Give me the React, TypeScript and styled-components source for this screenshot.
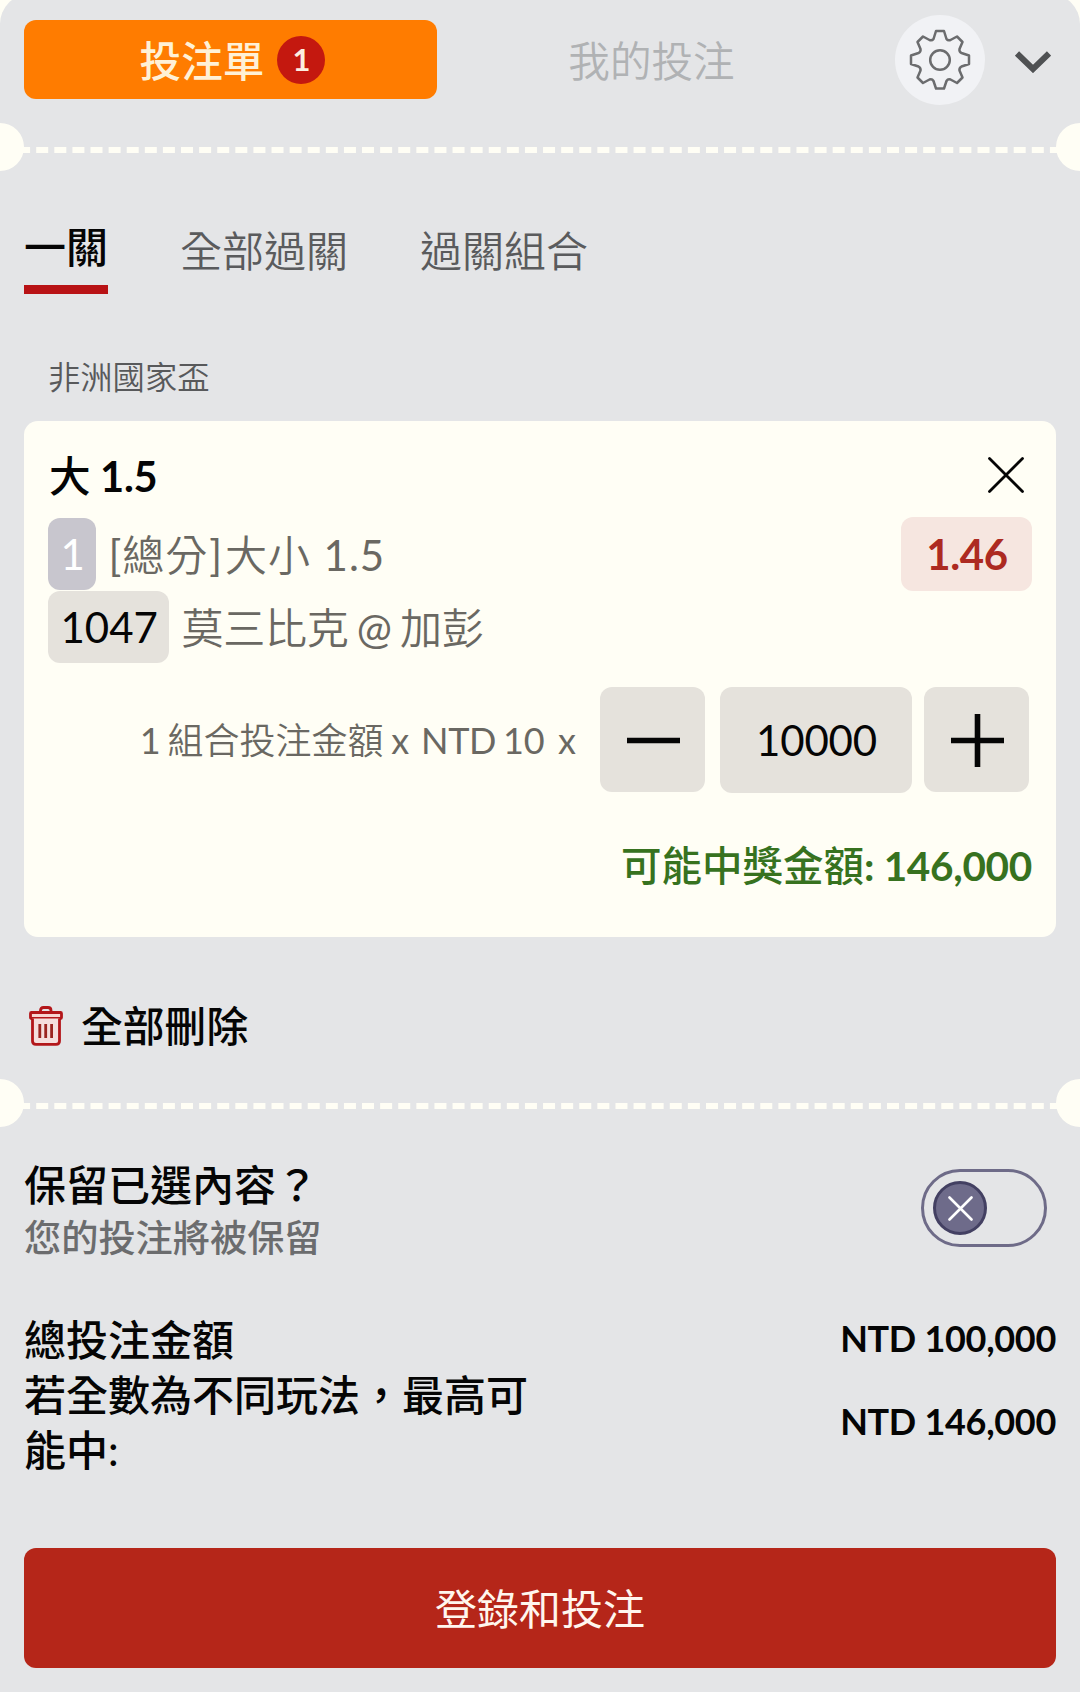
import React, { useState } from "react";
import styled, { createGlobalStyle } from "styled-components";

const GlobalStyle = createGlobalStyle`
  *, *::before, *::after { box-sizing: border-box; }
  body {
    margin: 0;
    background: #fffef5;
    font-family: Lato, "Noto Sans CJK TC", sans-serif;
    -webkit-font-smoothing: antialiased;
  }
  button {
    font: inherit;
    color: inherit;
    border: 0;
    padding: 0;
    margin: 0;
    background: none;
    cursor: pointer;
  }
`;

const Screen = styled.div`
  width: 1080px;
  height: 1692px;
  overflow: hidden;
`;

const Slip = styled.main`
  display: flex;
  flex-direction: column;
  height: 1698px;
  margin-top: -6px;
  padding-top: 6px;
  border-radius: 30px 30px 0 0;
  background: #e4e5e7;
  overflow: hidden;
  color: #050505;
  font-size: 42px;
  line-height: 54px;
`;

const Header = styled.header`
  display: flex;
  align-items: center;
  height: 123px;
  padding: 0 24px 3px;
`;

const SlipTab = styled.button<{ $active?: boolean }>`
  display: flex;
  align-items: center;
  justify-content: center;
  gap: 13px;
  width: 413px;
  height: 79px;
  margin-bottom: 1px;
  border-radius: 12px;
  padding: 2px 0 0 ${(p) => (p.$active ? "4px" : "16px")};
  font-size: 41.6px;
  font-weight: ${(p) => (p.$active ? 500 : 350)};
  color: ${(p) => (p.$active ? "#fff1d6" : "#b0b2b4")};
  background: ${(p) => (p.$active ? "#ff7c00" : "transparent")};
`;

const Count = styled.span`
  width: 48px;
  height: 48px;
  margin-top: -1px;
  border-radius: 50%;
  background: #c4180f;
  color: #fdeee0;
  font-size: 31px;
  font-weight: 700;
  line-height: 47px;
  text-align: center;
`;

const GearButton = styled.button`
  display: grid;
  place-items: center;
  width: 90px;
  height: 90px;
  margin-left: 45px;
  border-radius: 50%;
  background: #f1f2f5;
`;

const CollapseButton = styled.button`
  display: grid;
  place-items: center;
  margin: 4px 0 0 30px;
`;

const Perforation = styled.div`
  position: relative;
  flex: none;
  height: 48px;
  padding-top: 24px;

  &::before,
  &::after {
    content: "";
    position: absolute;
    top: 0;
    width: 48px;
    height: 48px;
    border-radius: 50%;
    background: #fffef5;
  }
  &::before { left: -24px; }
  &::after { right: -24px; }
`;

const Dashes = styled.div`
  border-top: 6px dashed #fffef5;
`;

const ModeTabs = styled.nav`
  display: flex;
  gap: 72px;
  height: 123px;
  padding: 0 24px;
  margin-top: 49px;
`;

const ModeTab = styled.button<{ $active?: boolean }>`
  height: 74px;
  line-height: 54px;
  padding: ${(p) => (p.$active ? "0 0 11px" : "4px 0 16px")};
  font-weight: ${(p) => (p.$active ? 500 : 350)};
  color: ${(p) => (p.$active ? "#050505" : "#5a5b5d")};
  border-bottom: ${(p) => (p.$active ? "9px solid #b81215" : "0")};
`;

const League = styled.h2`
  margin: 0;
  height: 78px;
  padding: 14px 48px 0;
  font-size: 32.3px;
  line-height: 40px;
  font-weight: 350;
  color: #58595b;
`;

const Card = styled.section`
  height: 516px;
  margin: 0 24px;
  padding: 28px 24px 0;
  border-radius: 14px;
  background: #fffef5;
`;

const CardHead = styled.div`
  display: flex;
  justify-content: space-between;
  align-items: center;
  height: 54px;
  padding: 0 8px 0 1px;
`;

const Pick = styled.h3`
  margin: 0;
  font-size: 41.6px;
  font-weight: 500;
  word-spacing: -1px;
`;

const Strong = styled.span`
  font-weight: 700;
  letter-spacing: -0.3px;
`;

const CloseButton = styled.button`
  display: grid;
  margin-bottom: 2px;
`;

const Selection = styled.div`
  display: flex;
  justify-content: space-between;
  margin-top: 14px;
`;

const Lines = styled.div`
  display: grid;
  gap: 1px;
  padding-top: 1px;
`;

const Line = styled.div`
  display: flex;
  align-items: center;
  gap: 12px;
  height: 72px;
  color: #6a6862;
  font-weight: 350;
  white-space: pre;
`;

const LineText = styled.span<{ $spaced?: boolean }>`
  padding-top: 2px;
  letter-spacing: ${(p) => (p.$spaced ? "1px" : "-0.2px")};
  word-spacing: ${(p) => (p.$spaced ? "0" : "-3px")};
`;

const Latin = styled.span`
  font-weight: 400;
`;

const ClosingBracket = styled(Latin)`
  margin: 0 2px 0 1px;
`;

const Chip = styled.span<{ $tone: "lilac" | "sand" }>`
  height: 72px;
  padding: 0 11.5px 0 12.5px;
  border-radius: 12px;
  line-height: 73px;
  font-weight: 400;
  color: ${(p) => (p.$tone === "lilac" ? "#ffffff" : "#050505")};
  background: ${(p) => (p.$tone === "lilac" ? "#c8c6ce" : "#e5e2dc")};
`;

const Odds = styled.span`
  width: 131px;
  height: 74px;
  border-radius: 12px;
  padding-left: 1px;
  background: #f6e6e0;
  color: #ad2a21;
  font-weight: 700;
  letter-spacing: -0.4px;
  line-height: 75px;
  text-align: center;
`;

const StakeRow = styled.div`
  display: flex;
  align-items: flex-start;
  justify-content: flex-end;
  height: 106px;
  margin-top: 24px;
  padding-right: 3px;
`;

const StakeLabel = styled.span`
  margin-right: 24px;
  font-size: 36px;
  line-height: 107px;
  font-weight: 350;
  color: #6a6862;
  white-space: pre;
`;

const Combos = styled(Latin)`
  margin-right: -3px;
`;

const Times = styled(Latin)`
  margin: 0 2px 0 -2px;
`;

const UnitPrice = styled(Latin)`
  margin-right: 4px;
  letter-spacing: -0.3px;
  word-spacing: -2px;
`;

const StepButton = styled.button`
  display: grid;
  flex: none;
  place-items: center;
  width: 105px;
  height: 105px;
  padding: 1px 0 0 1px;
  border-radius: 12px;
  background: #e5e2dc;
`;

const Amount = styled.output`
  flex: none;
  width: 192px;
  height: 106px;
  margin: 0 12px 0 15px;
  border-radius: 12px;
  padding-left: 1px;
  background: #e5e2dc;
  letter-spacing: -0.2px;
  line-height: 107px;
  text-align: center;
`;

const Payout = styled.p`
  margin: 46px 0 0;
  font-size: 40.5px;
  font-weight: 500;
  color: #37721f;
  text-align: right;
`;

const ClearAll = styled.button`
  display: flex;
  align-items: center;
  gap: 18px;
  height: 54px;
  margin: 62px 29px 26px;
  font-size: 41.8px;
  font-weight: 500;
`;

const KeepRow = styled.div`
  display: flex;
  justify-content: space-between;
  align-items: flex-start;
  height: 166px;
  margin-top: 31px;
  padding: 0 33px 0 24px;
`;

const KeepTitle = styled.div`
  font-weight: 500;
`;

const KeepNote = styled.div`
  padding-top: 2px;
  font-size: 37.2px;
  line-height: 48px;
  font-weight: 500;
  color: #6b6c6e;
`;

const Toggle = styled.button`
  display: flex;
  align-items: center;
  width: 126px;
  height: 78px;
  margin-top: 11px;
  padding-left: 9px;
  border: 3px solid #6e6b88;
  border-radius: 39px;
`;

const Knob = styled.span`
  display: grid;
  place-items: center;
  width: 54px;
  height: 54px;
  border: 3px solid #434062;
  border-radius: 50%;
  background: #6e6b8a;
`;

const Totals = styled.dl`
  display: grid;
  grid-template-columns: 510px 1fr;
  align-items: center;
  margin: -11px 24px 0;
  line-height: 55px;
`;

const TotalLabel = styled.dt`
  font-weight: 500;
`;

const TotalValue = styled.dd`
  margin: 0;
  padding-bottom: 5px;
  font-size: 36px;
  line-height: 50px;
  font-weight: 700;
  letter-spacing: -0.3px;
  text-align: right;
`;

const Submit = styled.button`
  flex: none;
  height: 120px;
  margin: 70px 24px 0;
  padding-top: 1px;
  border-radius: 12px;
  background: #b52619;
  color: #fff6ee;
  font-weight: 400;
`;

function GearIcon() {
  return (
    <svg width="62" height="62" viewBox="-31 -31 62 62" fill="none" stroke="#6b6c6e" strokeWidth="2.5" strokeLinejoin="round">
      <circle r="9.8" />
      <path d="M-4 -29H4L6.5 -21Q8 -19 10.5 -20L17 -23.5L22.5 -18L19.5 -11Q19 -8 21.5 -7L29 -4.5V4L21.5 6.5Q19 8 19.5 10.5L22.5 17.5L17 23L10.5 19.5Q8 18.5 6.5 21L4 28.5H-4L-6.5 21Q-8 18.5 -10.5 19.5L-17 23L-22.5 17.5L-19.5 10.5Q-19 8 -21.5 6.5L-29 4V-4.5L-21.5 -7Q-19 -8 -19.5 -11L-22.5 -18L-17 -23.5L-10.5 -20Q-8 -19 -6.5 -21Z" />
    </svg>
  );
}

function ChevronIcon() {
  return (
    <svg width="36" height="22" viewBox="0 0 36 22" fill="none" stroke="#4f5153" strokeWidth="6">
      <path d="M2 2.5L18 18L34 2.5" />
    </svg>
  );
}

function CrossIcon({ size, color, weight }: { size: number; color: string; weight: number }) {
  const end = size - 1.5;
  return (
    <svg width={size} height={size} fill="none" stroke={color} strokeWidth={weight} strokeLinecap="round">
      <path d={`M1.5 1.5L${end} ${end}M${end} 1.5L1.5 ${end}`} />
    </svg>
  );
}

function StepIcon({ plus }: { plus?: boolean }) {
  return (
    <svg width="53" height="53" viewBox="0 0 53 53" fill="none" stroke="#050505" strokeWidth="5.6">
      <path d={plus ? "M0 26.5H53M26.5 0V53" : "M0 26.5H53"} />
    </svg>
  );
}

function TrashIcon() {
  return (
    <svg width="34" height="40" viewBox="0 0 34 40" fill="none" stroke="#b3161a" strokeWidth="2.8" strokeLinejoin="round">
      <path d="M11.5 6.5V4.5Q11.5 1.5 14.5 1.5H19Q22 1.5 22 4.5V6.5" />
      <rect x="1.5" y="6.5" width="31" height="6" rx="1" fill="#f7d5d2" />
      <path d="M3.5 12.5V35Q3.5 38.3 7 38.3H27Q30.5 38.3 30.5 35V12.5" fill="#f5dedd" />
      <path d="M10.8 18V32M16.7 18V32M22.6 18V32" stroke="#9b2420" />
    </svg>
  );
}

export default function App() {
  const [units, setUnits] = useState(10000);
  const stake = units * 10;
  const win = Math.round(stake * 1.46);

  return (
    <Screen>
      <GlobalStyle />
      <Slip>
        <Header>
          <SlipTab $active>
            <span>投注單</span>
            <Count>1</Count>
          </SlipTab>
          <SlipTab>我的投注</SlipTab>
          <GearButton aria-label="設定">
            <GearIcon />
          </GearButton>
          <CollapseButton aria-label="收合">
            <ChevronIcon />
          </CollapseButton>
        </Header>

        <Perforation>
          <Dashes />
        </Perforation>

        <ModeTabs>
          <ModeTab $active>一關</ModeTab>
          <ModeTab>全部過關</ModeTab>
          <ModeTab>過關組合</ModeTab>
        </ModeTabs>

        <League>非洲國家盃</League>
        <Card>
          <CardHead>
            <Pick>大 <Strong>1.5</Strong></Pick>
            <CloseButton aria-label="移除">
              <CrossIcon size={36} color="#050505" weight={2.8} />
            </CloseButton>
          </CardHead>
          <Selection>
            <Lines>
              <Line>
                <Chip $tone="lilac">1</Chip>
                <LineText $spaced>
                  <Latin>[</Latin>總分<ClosingBracket>]</ClosingBracket>大小 <Latin>1.5</Latin>
                </LineText>
              </Line>
              <Line>
                <Chip $tone="sand">1047</Chip>
                <LineText>莫三比克 <Latin>@</Latin> 加彭</LineText>
              </Line>
            </Lines>
            <Odds>1.46</Odds>
          </Selection>
          <StakeRow>
            <StakeLabel>
              <Combos>1</Combos> 組合投注金額 <Times>x</Times> <UnitPrice>NTD 10</UnitPrice> <Latin>x</Latin>
            </StakeLabel>
            <StepButton aria-label="減少" onClick={() => setUnits(Math.max(0, units - 1))}>
              <StepIcon />
            </StepButton>
            <Amount>{units}</Amount>
            <StepButton aria-label="增加" onClick={() => setUnits(units + 1)}>
              <StepIcon plus />
            </StepButton>
          </StakeRow>
          <Payout>
            可能中獎金額<Strong>: {win.toLocaleString("en-US")}</Strong>
          </Payout>
        </Card>

        <ClearAll>
          <TrashIcon />
          <span>全部刪除</span>
        </ClearAll>

        <Perforation>
          <Dashes />
        </Perforation>

        <KeepRow>
          <div>
            <KeepTitle>保留已選內容？</KeepTitle>
            <KeepNote>您的投注將被保留</KeepNote>
          </div>
          <Toggle role="switch" aria-checked={false}>
            <Knob>
              <CrossIcon size={25} color="#ffffff" weight={2.6} />
            </Knob>
          </Toggle>
        </KeepRow>

        <Totals>
          <TotalLabel>總投注金額</TotalLabel>
          <TotalValue>NTD {stake.toLocaleString("en-US")}</TotalValue>
          <TotalLabel>若全數為不同玩法，最高可能中:</TotalLabel>
          <TotalValue>NTD {win.toLocaleString("en-US")}</TotalValue>
        </Totals>

        <Submit>登錄和投注</Submit>
      </Slip>
    </Screen>
  );
}
